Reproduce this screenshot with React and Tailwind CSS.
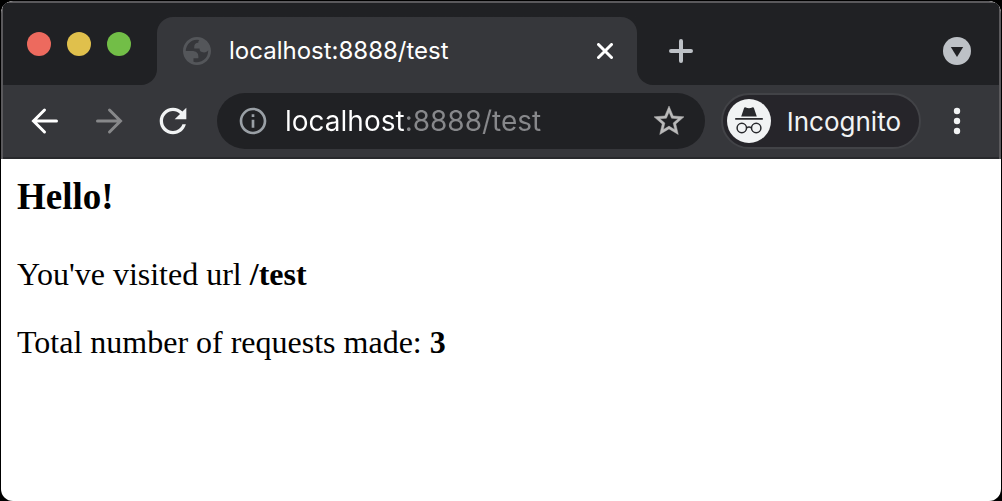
import React from "react";

function Globe() {
  return (
    <svg viewBox="2 2 20 20" className="size-7 shrink-0" aria-hidden="true">
      <path
        fill="#54565a"
        d="M12 2c5.520 0 10 4.480 10 10s-4.480 10-10 10S2 17.520 2 12 6.480 2 12 2zM4 12h4.400c3.407.022 4.922 1.730 4.543 5.127H9.488v2.470a8.004 8.004 0 0 0 10.498-8.083C19.327 12.504 18.332 13 17 13c-2.137 0-3.206-.916-3.206-2.750h-3.748c-.274-2.728.683-4.092 2.870-4.092 0-.975.327-1.597.811-1.970A8.004 8.004 0 0 0 4 12z"
      />
    </svg>
  );
}

function Incognito() {
  return (
    <svg viewBox="0 0 44 44" className="size-11 shrink-0" aria-hidden="true">
      <circle cx="22" cy="22" r="22" fill="#f1f3f4" />
      <path fill="#28292d" d="M17 9.300c.2-.9.900-1.100 1.700-.8 2.300.9 4.300.9 6.600 0 .8-.3 1.500-.1 1.700.8l2.800 8.200H14.200z" />
      <path fill="#28292d" d="M8.200 19.100h27.600v1.700H8.200z" />
      <g fill="none" stroke="#28292d" strokeWidth="1.500">
        <circle cx="14.800" cy="29" r="4.700" />
        <circle cx="29.200" cy="29" r="4.700" />
        <path d="M19.500 28.800c1.500-.9 3.500-.9 5 0" />
      </g>
    </svg>
  );
}

function TabStrip() {
  return (
    <div className="flex bg-[#36373b]">
      <div className="flex w-[154px] shrink-0 items-center gap-4 rounded-br-2xl bg-[#202124] pl-6">
        <button aria-label="Close window" className="size-6 rounded-full bg-[#ed6a5e]" />
        <button aria-label="Minimize window" className="size-6 rounded-full bg-[#e0c04c]" />
        <button aria-label="Zoom window" className="size-6 rounded-full bg-[#72be47]" />
      </div>
      <div className="w-[480px] min-w-0 bg-[#202124] bg-linear-to-t from-[#36373b] from-50% to-[#202124] to-50% pt-3.5">
        <div className="flex h-17 items-center gap-[18px] rounded-t-2xl bg-[#36373b] pr-6 pl-[26px]">
          <Globe />
          <span className="min-w-0 flex-1 truncate text-2xl text-white">localhost:8888/test</span>
          <button aria-label="Close tab" className="shrink-0">
            <svg viewBox="0 0 16 16" className="size-4">
              <path d="M1.500 1.500l13 13M14.500 1.500l-13 13" stroke="#fff" strokeWidth="3" strokeLinecap="round" />
            </svg>
          </button>
        </div>
      </div>
      <div className="flex flex-1 items-center justify-between rounded-bl-2xl bg-[#202124] pt-3.5 pr-7 pl-8">
        <button aria-label="New tab">
          <svg viewBox="0 0 24 24" className="size-6">
            <path d="M12 2v20M2 12h20" stroke="#bdc1c6" strokeWidth="4" strokeLinecap="round" />
          </svg>
        </button>
        <button aria-label="Search tabs">
          <svg viewBox="0 0 28 28" className="size-7">
            <circle cx="14" cy="14" r="14" fill="#bdc1c6" />
            <path d="M7.800 10h12.400L14 20z" fill="#202124" />
          </svg>
        </button>
      </div>
    </div>
  );
}

function Toolbar() {
  return (
    <div className="flex h-[74px] items-center border-b-2 border-[#28292c] bg-[#36373b] px-[26px]">
      <div className="flex shrink-0 gap-8">
        <button aria-label="Back">
          <svg viewBox="0 0 32 32" className="size-8" fill="none" stroke="#fff" strokeWidth="3" strokeLinecap="round">
            <path d="M27.500 16H5M15.500 5L4.500 16l11 11" />
          </svg>
        </button>
        <button aria-label="Forward">
          <svg viewBox="0 0 32 32" className="size-8" fill="none" stroke="#87888a" strokeWidth="3" strokeLinecap="round">
            <path d="M4.500 16H27M16.500 5l11 11-11 11" />
          </svg>
        </button>
        <button aria-label="Reload">
          <svg viewBox="2.400 2.400 19.200 19.200" className="size-8" fill="#f1f3f4">
            <path d="M17.650 6.350C16.200 4.900 14.210 4 12 4c-4.420 0-7.990 3.580-7.990 8s3.570 8 7.990 8c3.730 0 6.840-2.550 7.730-6h-2.080c-.820 2.330-3.040 4-5.650 4-3.310 0-6-2.690-6-6s2.690-6 6-6c1.660 0 3.140.690 4.220 1.780L13 11h7V4l-2.350 2.350z" />
          </svg>
        </button>
      </div>
      <form className="ml-7 flex h-14 min-w-0 flex-1 items-center rounded-full bg-[#202124] pr-[18px] pl-5" onSubmit={(e) => e.preventDefault()}>
        <button type="button" aria-label="View site information" className="shrink-0">
          <svg viewBox="0 0 24 24" className="size-8" fill="#9aa0a6">
            <path d="M11 7h2v2h-2zm0 4h2v6h-2zm1-9C6.480 2 2 6.480 2 12s4.480 10 10 10 10-4.480 10-10S17.520 2 12 2zm0 18c-4.410 0-8-3.590-8-8s3.590-8 8-8 8 3.590 8 8-3.590 8-8 8z" />
          </svg>
        </button>
        <input
          aria-label="Address and search bar"
          defaultValue="localhost:8888/test"
          spellCheck={false}
          className="ml-4 h-full min-w-0 flex-1 bg-linear-to-r from-white from-[120px] to-[#87888b] to-[120px] bg-clip-text text-[28px] text-transparent caret-white outline-none"
        />
        <button type="button" aria-label="Bookmark this tab" className="shrink-0">
          <svg viewBox="0 0 24 24" className="size-9" fill="#bababa" stroke="#bababa" strokeWidth="0.300">
            <path d="M22 9.240l-7.190-.620L12 2 9.190 8.630 2 9.240l5.460 4.730L5.820 21 12 17.270 18.180 21l-1.630-7.030L22 9.240zM12 15.400l-3.760 2.270 1-4.280-3.320-2.880 4.380-.380L12 6.100l1.710 4.040 4.380.380-3.320 2.880 1 4.280L12 15.400z" />
          </svg>
        </button>
      </form>
      <button className="ml-4 flex h-14 shrink-0 items-center gap-4 rounded-full border-2 border-[#424347] bg-[#26252a] pr-[18px] pl-1 text-[26px] text-[#f1f3f4]">
        <Incognito />
        Incognito
      </button>
      <button aria-label="Customize and control" className="ml-5 shrink-0">
        <svg viewBox="0 0 32 32" className="size-8" fill="#f1f3f4">
          <circle cx="16" cy="6" r="3.200" />
          <circle cx="16" cy="16" r="3.200" />
          <circle cx="16" cy="26" r="3.200" />
        </svg>
      </button>
    </div>
  );
}

export default function App() {
  return (
    <div className="flex min-h-screen flex-col bg-black px-px pt-px">
      <div className="flex flex-1 flex-col overflow-hidden rounded-xl bg-white">
        <header className="rounded-t-xl border-x-2 border-t-2 border-[#5a595c] bg-[#202124] font-['Inter',sans-serif]">
          <TabStrip />
          <Toolbar />
        </header>
        <main className="px-4 pt-5 font-['Liberation_Serif',serif] text-[32px] leading-9 text-black">
          <h3 className="text-[37px] leading-9 font-bold">Hello!</h3>
          <p className="mt-[41px]">
            You've visited url <b>/test</b>
          </p>
          <p className="mt-8">
            Total number of requests made: <b>3</b>
          </p>
        </main>
      </div>
    </div>
  );
}
